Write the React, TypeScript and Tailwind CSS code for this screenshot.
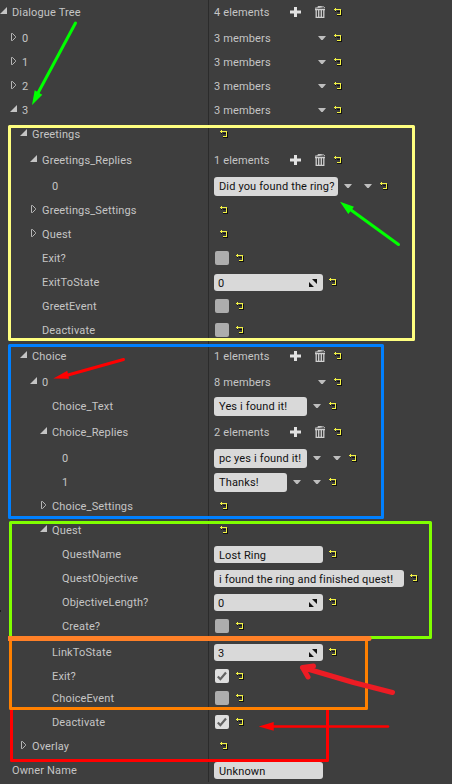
import type { ReactNode } from "react";

function Reset({ className = "" }: { className?: string }) {
  return (
    <svg className={`h-2 w-2 shrink-0 ${className}`} viewBox="0 0 8 8" shapeRendering="crispEdges">
      <path d="M1 3h1v1h-1zM3 3h3v1h-3zM7 2h1v6h-5v-1h4z" fill="#111" />
      <path d="M0 1h7v6h-4v-1h3v-4h-6zM1 0h1v3h-1z" fill="#f2f244" />
    </svg>
  );
}

function Caret({ className = "" }: { className?: string }) {
  return (
    <svg className={`h-1 w-2 shrink-0 ${className}`} viewBox="0 0 8 4">
      <path d="M0 0h8L4.7 4H3.3z" fill="#bebebe" />
    </svg>
  );
}

function Count({ n, members }: { n: number; members?: boolean }) {
  return (
    <>
      <span className="w-[76px] shrink-0 pt-0.5">{n} {members ? "members" : "elements"}</span>
      {members ? (
        <Caret className="ml-7" />
      ) : (
        <>
          <svg className="h-[10px] w-[11px] shrink-0" viewBox="0 0 11 10">
            <path d="M4 0h3v3.5h4v3H7V10H4V6.5H0v-3h4z" fill="#e2e2e2" />
          </svg>
          <svg className="ml-[14px] h-3 w-[10px] shrink-0" viewBox="0 0 10 12">
            <path d="M0 2.2 8.5 .7 10 2.2M3 1.4V.5h3.5v.6" fill="none" stroke="#c8c8c8" />
            <path d="M0 3.5h10M1.2 4v7.4h7.6V4M3.7 4v7M6.3 4v7" fill="none" stroke="#d0d0d0" strokeWidth="1.3" />
          </svg>
        </>
      )}
      <Reset className={members ? "ml-2" : "ml-[9px]"} />
    </>
  );
}

function Field({ text, width, carets = 0, reset = true }: { text: string; width: string; carets?: number; reset?: boolean }) {
  return (
    <>
      <span className={`${width} ${carets ? "h-[19px]" : "h-[17px] pt-0.5"} mt-px flex shrink-0 items-center whitespace-nowrap rounded-[3px] bg-[#d9d9d9] pl-[5px] text-[#111]`}>{text}</span>
      {carets > 0 && <Caret className="ml-1.5" />}
      {carets > 1 && <Caret className="ml-3" />}
      {reset && <Reset className={carets ? "ml-2" : "ml-1.5"} />}
    </>
  );
}

function Numeric({ value }: { value: string }) {
  return (
    <>
      <span className="mt-px flex h-[17px] w-[109px] shrink-0 items-center justify-between rounded-[3px] bg-[#d9d9d9] pl-1 pr-1.5 text-[#111]">
        <span className="pt-0.5">{value}</span>
        <svg className="h-2 w-2" viewBox="0 0 8 8">
          <path d="M3 0h5v5zM0 3v5h5z" fill="#111" />
        </svg>
      </span>
      <Reset className="ml-1.5" />
    </>
  );
}

function Check({ on }: { on?: boolean }) {
  return (
    <>
      <span className={`ml-px flex size-[14px] shrink-0 items-center justify-center rounded-[2px] ${on ? "bg-[#dedede]" : "bg-[#adadad]"}`}>
        {on && (
          <svg className="size-[10px]" viewBox="0 0 10 10">
            <path d="m.8 5.4 2.6 2.8L9 1.5" fill="none" stroke="#636363" strokeWidth="2.2" />
          </svg>
        )}
      </span>
      <Reset className="ml-[7px]" />
    </>
  );
}

type Item = { label: string; pad: string; open?: boolean; h?: string; value: ReactNode };

const struct = <Reset className="ml-1.5" />;
const d0 = "pl-0", d1 = "pl-[10px]", d2 = "pl-5", d3 = "pl-[30px]", d4 = "pl-10", d5 = "pl-[50px]";
const tall = "h-[26px]";

const rows: Item[] = [
  { label: "Dialogue Tree", pad: d0, open: true, h: tall, value: <Count n={4} /> },
  { label: "0", pad: d1, open: false, value: <Count n={3} members /> },
  { label: "1", pad: d1, open: false, value: <Count n={3} members /> },
  { label: "2", pad: d1, open: false, value: <Count n={3} members /> },
  { label: "3", pad: d1, open: true, value: <Count n={3} members /> },
  { label: "Greetings", pad: d2, open: true, h: tall, value: struct },
  { label: "Greetings_Replies", pad: d3, open: true, h: tall, value: <Count n={1} /> },
  { label: "0", pad: d4, value: <Field text="Did you found the ring?" width="w-[124px]" carets={2} /> },
  { label: "Greetings_Settings", pad: d3, open: false, value: struct },
  { label: "Quest", pad: d3, open: false, value: struct },
  { label: "Exit?", pad: d3, value: <Check /> },
  { label: "ExitToState", pad: d3, value: <Numeric value="0" /> },
  { label: "GreetEvent", pad: d3, value: <Check /> },
  { label: "Deactivate", pad: d3, h: tall, value: <Check /> },
  { label: "Choice", pad: d2, open: true, h: tall, value: <Count n={1} /> },
  { label: "0", pad: d3, open: true, value: <Count n={8} members /> },
  { label: "Choice_Text", pad: d4, h: tall, value: <Field text="Yes i found it!" width="w-[93px]" carets={1} /> },
  { label: "Choice_Replies", pad: d4, open: true, h: tall, value: <Count n={2} /> },
  { label: "0", pad: d5, value: <Field text="pc yes i found it!" width="w-[93px]" carets={2} /> },
  { label: "1", pad: d5, value: <Field text="Thanks!" width="w-[73px]" carets={2} /> },
  { label: "Choice_Settings", pad: d4, open: false, value: struct },
  { label: "Quest", pad: d4, open: true, value: struct },
  { label: "QuestName", pad: d5, value: <Field text="Lost Ring" width="w-[109px]" /> },
  { label: "QuestObjective", pad: d5, value: <Field text="i found the ring and finished quest!" width="w-[190px]" /> },
  { label: "ObjectiveLength?", pad: d5, value: <Numeric value="0" /> },
  { label: "Create?", pad: d5, h: tall, value: <Check /> },
  { label: "LinkToState", pad: d4, value: <Numeric value="3" /> },
  { label: "Exit?", pad: d4, h: "h-[22px]", value: <Check on /> },
  { label: "ChoiceEvent", pad: d4, value: <Check /> },
  { label: "Deactivate", pad: d4, value: <Check on /> },
  { label: "Overlay", pad: d2, open: false, value: struct },
  { label: "Owner Name", pad: d0, value: <Field text="Unknown" width="w-[109px]" reset={false} /> },
];

function Row({ label, pad, open, h = "h-6", value }: Item) {
  return (
    <div className={`flex ${h}`}>
      <div className={`w-[209px] shrink-0 border-r border-[#2b2b2b] ${pad}`}>
        <div className="flex h-6 items-center">
          <span className="w-3 shrink-0">
            {open !== undefined && (
              <svg className="-mt-[2px] h-2 w-2" viewBox="0 0 8 8">
                {open ? <path d="M7 0v7H0z" fill="#c4c4c4" /> : <path d="M1.5.5v7h1L5.5 4.5v-1L2.5.5z" fill="none" stroke="#c4c4c4" strokeWidth=".9" />}
              </svg>
            )}
          </span>
          <span className="pt-0.5">{label}</span>
        </div>
      </div>
      <div className="flex h-6 items-center pl-[5px]">{value}</div>
    </div>
  );
}

function Annotations() {
  return (
    <svg className="pointer-events-none absolute left-0 top-0" width="452" height="784" fill="none" strokeWidth="3" strokeLinejoin="round">
      <path d="M0 611h1" stroke="#111" strokeWidth="1.5" />
      <rect x="9.5" y="126.5" width="404" height="213" stroke="#ffff80" />
      <rect x="9.5" y="345.5" width="373" height="172" stroke="#0080ff" />
      <rect x="10.5" y="522.5" width="420" height="115" stroke="#80ff00" />
      <path d="M11.5 709v51.5h316V709" stroke="#f00" />
      <path d="M10.5 639v69.5h356V639" stroke="#ff8000" />
      <path d="M8 638.5h361" stroke="#ff8027" strokeWidth="5" />
      <circle cx="369" cy="638.5" r="2.5" fill="#ff8027" stroke="none" />
      <g strokeLinecap="round">
        <path d="M75.5 23 38 93" stroke="#0f0" />
        <path d="M398.5 244.5 351 210" stroke="#0f0" />
        <path d="M123.5 359.5 68 375" stroke="#f00" />
        <path d="M388 726.5H272" stroke="#f00" strokeWidth="2.5" />
        <path d="m392.5 692.5-39-10-51-15 11-1.5M302.5 667.5l5.5 9.5" stroke="#ed1c24" strokeWidth="5" />
      </g>
      <path d="m32 105 2.7-14.7 7.6 4.4zM340 201.7l14 5-5.7 7.3z" fill="#0f0" />
      <path d="m53.3 378.5 14-7.8 1.7 8zM258.7 726.5l15-4.5v8.7z" fill="#f00" />
    </svg>
  );
}

export default function App() {
  return (
    <main className="relative h-[784px] w-[452px] overflow-hidden bg-[#3e3e3e] font-['Roboto',sans-serif] text-[11px] leading-[14px] tracking-[0.14px] text-[#c5c5c5]">
      {rows.map((row, i) => <Row key={i} {...row} />)}
      <Annotations />
    </main>
  );
}
